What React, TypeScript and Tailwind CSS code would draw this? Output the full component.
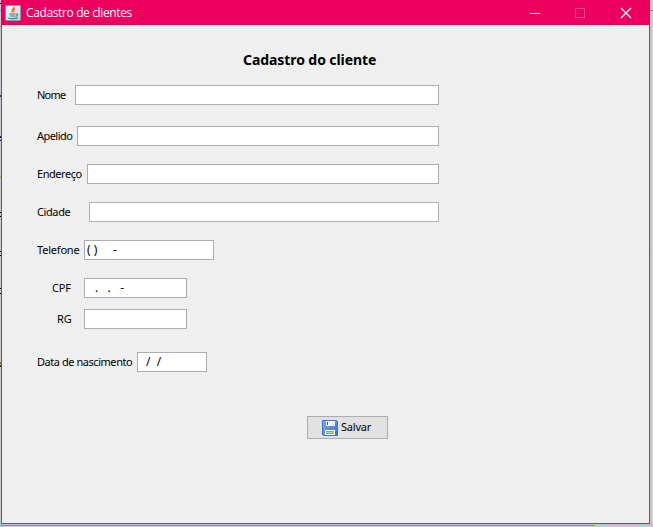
import React from "react";

type RowProps = {
  label: string;
  row: string;
  labelClass: string;
  fieldClass: string;
  value?: React.ReactNode;
};

function Row({ label, row, labelClass, fieldClass, value }: RowProps) {
  return (
    <div className={`flex h-5 shrink-0 items-center ${row}`}>
      <label className={`shrink-0 whitespace-nowrap leading-4 ${labelClass}`}>{label}</label>
      <div className={`flex h-5 shrink-0 items-center whitespace-pre border border-[#abadb3] bg-white text-[12px] leading-4 ${fieldClass}`}>
        {value}
      </div>
    </div>
  );
}

function JavaIcon() {
  return (
    <svg width="16" height="16" viewBox="0 0 16 16" className="shrink-0">
      <defs>
        <linearGradient id="tile" x1="0" y1="0" x2="1" y2="1">
          <stop offset="0" stopColor="#ffffff" />
          <stop offset="1" stopColor="#c9ced3" />
        </linearGradient>
      </defs>
      <rect x=".5" y=".5" width="15" height="15" rx="1" fill="url(#tile)" stroke="#8c9ba6" />
      <path d="M8.900 1.800c.8 2-3.600 2.800-1.400 5.600M10.200 4c-2.600 1-1.700 1.900-1.300 3.200" fill="none" stroke="#e8762c" strokeWidth="1.4" />
      <path d="M4 9h6.700M4.800 11h5.200M11 9c2.500-.4 2 2-.5 2.400M3 13c2 .9 8 .9 10-.2" fill="none" stroke="#4b7390" strokeWidth="1.100" />
    </svg>
  );
}

function SaveIcon() {
  return (
    <svg width="16" height="16" viewBox="0 0 16 16" className="shrink-0">
      <defs>
        <linearGradient id="disk" x1="0" y1="0" x2="1" y2="1">
          <stop offset="0" stopColor="#79aee8" />
          <stop offset="1" stopColor="#3f70c4" />
        </linearGradient>
      </defs>
      <path d="M.5 .5h14l1 1v14H1.500l-1-1z" fill="url(#disk)" stroke="#4673bd" />
      <path d="M4 1h9v5H4z" fill="#eef4fc" />
      <path d="M5 2h1v3H5z" fill="#456" />
      <path d="M3 10h10v5H3z" fill="#fff" />
      <path d="M4 11h8v1H4zM4 13h8v1H4z" fill="#79b65b" />
      <path d="M4 12h8v1H4z" fill="#b5dba0" />
    </svg>
  );
}

/* Sliver of the window behind, visible along the left edge. */
function BackdropEdge() {
  return (
    <div className="flex w-px shrink-0 flex-col bg-[#c4c8d0]">
      <i className="mt-[3px] h-px bg-black" />
      <i className="mt-[6px] h-px bg-[#7f93b5]" />
      <i className="mt-[15px] h-px bg-[#e08a3c]" />
      <i className="mt-[68px] h-[2px] bg-[#27384d]" />
      <i className="mt-[39px] h-[2px] bg-[#15157a]" />
      <i className="mt-[2px] h-px bg-[#15157a]" />
      <i className="mt-[35px] h-[2px] bg-[#b5b65e]" />
      <i className="mt-[34px] h-px bg-black" />
      <i className="mt-[3px] h-px bg-black" />
      <i className="mt-[34px] h-px bg-black" />
      <i className="mt-[3px] h-px bg-black" />
      <i className="mt-[32px] h-px bg-black" />
      <i className="mt-[4px] h-px bg-black" />
      <i className="mt-[68px] h-[2px] bg-[#a06a2c]" />
      <i className="mt-px h-[2px] bg-[#5b2a2a]" />
    </div>
  );
}

export default function App() {
  return (
    <div className="flex h-[527px] w-[653px] flex-col overflow-hidden bg-[#c6c7d4] font-['Noto_Sans',sans-serif] text-[11px] text-black">
      <div className="flex h-[524px] shrink-0">
        <BackdropEdge />
        <main className="flex w-[649px] shrink-0 flex-col bg-[#efefef]">
          <header className="flex h-[25px] shrink-0 items-center bg-[#eb005e] pl-1 font-['Open_Sans',sans-serif] text-xs text-white">
            <JavaIcon />
            <span className="ml-[5px] whitespace-nowrap tracking-[-0.37px]">Cadastro de clientes</span>
            <svg width="102" height="12" viewBox="0 0 102 12" className="ml-auto mr-[18px]" fill="none" shapeRendering="crispEdges">
              <path d="M0 6.500h10" stroke="#fff" />
              <path d="M45.500 1.500h9v9h-9z" stroke="#f3458a" />
              <path d="M91 1l10 10M101 1L91 11" stroke="#fff" strokeWidth="1.3" shapeRendering="auto" />
            </svg>
          </header>
          <div className="flex grow flex-col border-x border-b border-[#db1c6a] pl-[35px]">
            <h1 className="ml-[206px] mt-[25px] h-5 shrink-0 whitespace-nowrap text-[14px] font-bold leading-5 tracking-[-0.08px]">Cadastro do cliente</h1>
            <Row label="Nome" row="mt-[15px]" labelClass="w-[38px] tracking-[-0.8px]" fieldClass="w-[364px]" />
            <Row label="Apelido" row="mt-[21px]" labelClass="w-[40px] tracking-[-0.55px]" fieldClass="w-[362px]" />
            <Row label="Endereço" row="mt-[18px]" labelClass="w-[50px] tracking-[-0.45px]" fieldClass="w-[352px]" />
            <Row label="Cidade" row="mt-[18px]" labelClass="w-[52px] tracking-[-0.4px]" fieldClass="w-[350px]" />
            <Row label="Telefone" row="mt-[18px]" labelClass="w-[47px] tracking-[-0.2px]" fieldClass="w-[130px] pl-0.5" value={"( )     -"} />
            <Row label="CPF" row="mt-[18px]" labelClass="w-[47px] pl-[15px] tracking-[-0.2px]" fieldClass="w-[103px] pl-2.5" value={".   .   -"} />
            <Row label="RG" row="mt-[11px]" labelClass="w-[47px] pl-5 tracking-[-0.2px]" fieldClass="w-[103px]" />
            <Row label="Data de nascimento" row="mt-[23px]" labelClass="w-[100px] tracking-[-0.45px]" fieldClass="w-[70px] pl-2" value={"/  /"} />
            <button className="ml-[270px] mt-11 flex h-[23px] w-[81px] shrink-0 items-center gap-[3px] border border-[#adadad] bg-[#e1e1e1] pl-3.5">
              <SaveIcon />
              <span className="pb-px leading-4 tracking-[-0.2px]">Salvar</span>
            </button>
          </div>
        </main>
        <div className="flex w-[3px] shrink-0 flex-col bg-linear-to-r from-[#bdc0bd] to-[#d2d5d2]">
          <i className="mt-[10px] h-px bg-[#7488a8]" />
        </div>
      </div>
      <div className="h-px shrink-0 bg-[#bfc0c8]" />
      <div className="h-px w-[595px] shrink-0 bg-[#c98a26]" />
    </div>
  );
}
